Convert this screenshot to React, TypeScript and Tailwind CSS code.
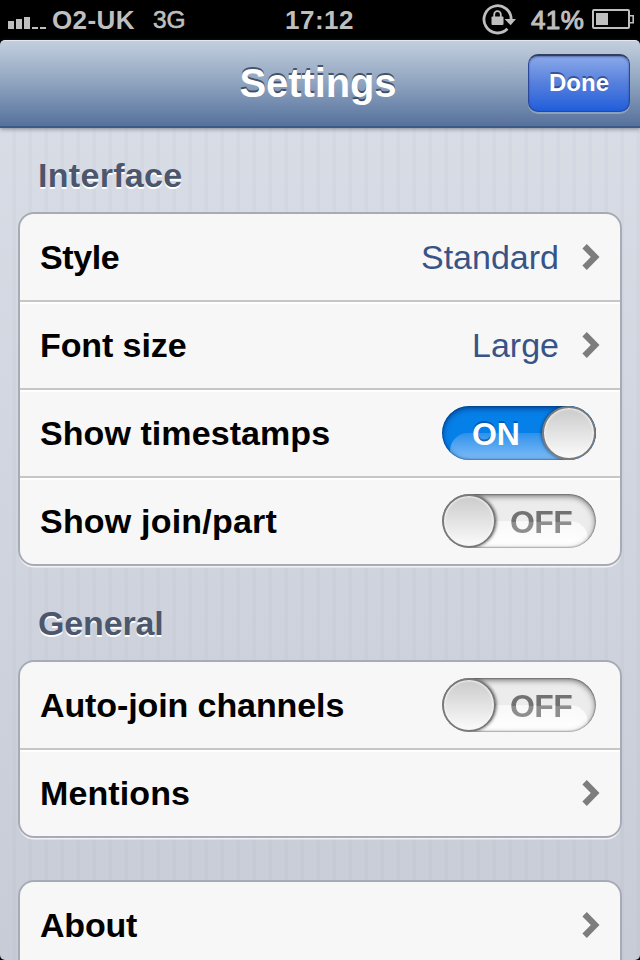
import type { ReactNode } from "react";

function StatusBar() {
  return (
    <div className="flex h-10 w-full items-start bg-black text-[#bfbfbf]">
      <svg className="ml-2 mt-4 h-[13px] w-[38px] shrink-0" viewBox="0 0 38 13" fill="currentColor" shapeRendering="crispEdges">
        <rect x="0" y="5" width="6" height="8" />
        <rect x="8" y="3" width="6" height="10" />
        <rect x="16" y="1" width="6" height="12" />
        <rect x="24" y="11" width="6" height="2" />
        <rect x="32" y="11" width="6" height="2" />
      </svg>
      <div className="ml-1.5 w-[101px] whitespace-nowrap text-[26px] font-bold leading-10 tracking-[0.4px]">O2-UK</div>
      <div className="w-[132px] whitespace-nowrap text-[24.5px] leading-10 tracking-[-0.2px] [-webkit-text-stroke:0.6px_#bfbfbf]">3G</div>
      <div className="w-[197px] whitespace-nowrap text-[26px] font-bold leading-10 tracking-[0.5px]">17:12</div>
      <svg className="mt-0.5 h-[34px] w-[36px] shrink-0" viewBox="0 0 36 34" fill="none">
        <path d="M29.2 17.5A13.6 13.6 0 1 0 25.4 26.8" stroke="currentColor" strokeWidth="2.8" />
        <path d="M22.6 17H34l-5.4 6.3z" fill="currentColor" />
        <rect x="9.5" y="14.5" width="12" height="8.5" rx="1" fill="currentColor" />
        <path d="M12.2 15v-2.5a3.3 3.3 0 0 1 6.6 0V15" stroke="currentColor" strokeWidth="1.8" />
      </svg>
      <div className="ml-[13px] w-[61px] whitespace-nowrap text-[26px] leading-10 tracking-[0.4px] [-webkit-text-stroke:1px_#bfbfbf]">41%</div>
      <svg className="mt-[9px] h-5 w-[42px] shrink-0" viewBox="0 0 42 20" fill="none">
        <rect x="1" y="1" width="36" height="18" rx="1" stroke="currentColor" strokeWidth="2" />
        <rect x="4" y="4" width="12" height="12" fill="currentColor" />
        <path d="M38 6.8h3.2v7H38" stroke="currentColor" strokeWidth="1.6" />
      </svg>
    </div>
  );
}

function NavBar() {
  return (
    <div className="bg-black">
      <header className="relative z-10 grid h-[88px] grid-cols-[1fr_180px_1fr] items-center rounded-t-[5px] border-b-2 border-[#3c5a86] border-t border-t-[#e3e9f1] bg-linear-to-b from-[#c3cfde] via-[#8ea3be] via-50% to-[#56719c] shadow-[0_1px_4px_rgba(50,60,70,0.55)]">
        <span />
        <h1 className="-ml-1 -mt-px whitespace-nowrap text-center text-[40px] font-bold leading-[44px] tracking-[-0.1px] text-white [text-shadow:0_-2px_0_rgba(42,54,72,0.75)]">Settings</h1>
        <button className="-mt-[2px] mr-[10px] h-[58px] w-[102px] justify-self-end rounded-[10px] border border-[#2c479a] border-t-2 border-t-[#343f60] bg-linear-to-b from-[#8ba9ea] via-[#557fdc] to-[#205ddb] text-[24px] font-bold leading-[54px] text-white shadow-[0_2px_0_rgba(255,255,255,0.25),inset_0_1px_2px_rgba(30,50,110,0.5)] [text-shadow:0_-2px_0_rgba(35,58,120,0.7)]">Done</button>
      </header>
    </div>
  );
}

function Chevron() {
  return (
    <svg className="ml-[23px] mr-5 h-[26px] w-[18px] shrink-0" viewBox="0 0 18 26">
      <path d="M4.8 0 17.5 13 4.8 26 .4 21.6 8.8 13 .4 4.4z" fill="#7d7d7d" />
    </svg>
  );
}

function Toggle({ on }: { on?: boolean }) {
  return on ? (
    <div className="relative mr-6 flex h-[54px] w-[154px] items-center overflow-hidden rounded-full bg-[#0680e9]">
      <div className="absolute bottom-0 left-[8px] h-[27px] w-[160px] rounded-tl-[18px] bg-linear-to-b from-[#2b91ea] to-[#7dbdf8]" />
      <div className="absolute inset-0 rounded-full shadow-[inset_0_2px_6px_rgba(0,35,95,0.75),inset_0_0_2px_rgba(0,30,80,0.8)]" />
      <span className="relative ml-[30px] mt-[2px] text-[32px] font-bold tracking-[-0.2px] text-white [text-shadow:0_-2px_0_rgba(0,70,145,0.65)]">ON</span>
      <div className="absolute right-0 top-0 size-[54px] rounded-full border-2 border-[#7a7a7a] bg-linear-to-b from-[#cbcbcb] to-[#fbfbfb] shadow-[-1px_0_3px_rgba(0,20,50,0.5),inset_0_0_2px_1px_#f5f5f5]" />
    </div>
  ) : (
    <div className="relative mr-6 flex h-[54px] w-[154px] items-center overflow-hidden rounded-full bg-[#ececec]">
      <div className="absolute bottom-0 right-[8px] h-[27px] w-[160px] rounded-tr-[18px] bg-linear-to-b from-[#f8f8f8] to-white" />
      <div className="absolute inset-0 rounded-full shadow-[inset_0_2px_6px_rgba(0,0,0,0.55),inset_0_0_2px_rgba(0,0,0,0.75)]" />
      <span className="relative ml-[68px] mt-[2px] bg-linear-to-b from-[#727272] from-50% to-[#8e8e8e] to-50% bg-clip-text text-[32px] font-bold tracking-[-0.6px] text-transparent">OFF</span>
      <div className="absolute left-0 top-0 size-[54px] rounded-full border-2 border-[#7a7a7a] bg-linear-to-b from-[#cbcbcb] to-[#fbfbfb] shadow-[1px_0_3px_rgba(0,0,0,0.45),inset_0_0_2px_1px_#f5f5f5]" />
    </div>
  );
}

function Row({ label, tracking = "", children }: { label: string; tracking?: string; children: ReactNode }) {
  return (
    <div className="flex h-[88px] items-center border-b-2 border-[#c6c6c6] pl-5 shadow-[inset_0_2px_0_#fff] first:shadow-none last:h-[86px] last:border-b-0">
      <span className={"flex-1 whitespace-nowrap text-[34px] font-bold leading-[40px] text-black " + tracking}>{label}</span>
      {children}
    </div>
  );
}

function Value({ children }: { children: ReactNode }) {
  return <span className="whitespace-nowrap text-[34px] leading-[40px] text-[#385487]">{children}</span>;
}

function Card({ children }: { children: ReactNode }) {
  return (
    <div className="mx-[18px] overflow-hidden rounded-[16px] border-2 border-[#a6abb5] bg-[#f7f7f7] shadow-[0_2px_0_-0.5px_rgba(255,255,255,0.75)]">
      {children}
    </div>
  );
}

function Heading({ tracking = "", children }: { tracking?: string; children: ReactNode }) {
  return <h2 className={"ml-[38px] text-[34px] font-bold leading-[40px] text-[#4c566c] [text-shadow:0_2px_0_#fff] " + tracking}>{children}</h2>;
}

export default function App() {
  return (
    <div className="flex h-[960px] w-[640px] flex-col overflow-hidden bg-black font-['Liberation_Sans',Arial,sans-serif]">
      <StatusBar />
      <NavBar />
      <main className="flex-1 overflow-hidden rounded-b-[5px] bg-[repeating-linear-gradient(90deg,transparent_0px,transparent_12px,rgba(130,145,175,0.06)_13px,rgba(130,145,175,0.06)_16px),linear-gradient(180deg,#d8dce5,#c8ccd7)]">
        <div className="mb-[17px] mt-[27px]">
          <Heading tracking="tracking-[0.3px]">Interface</Heading>
        </div>
        <Card>
          <Row label="Style" tracking="tracking-[-0.4px]"><Value>Standard</Value><Chevron /></Row>
          <Row label="Font size" tracking="tracking-[-0.1px]"><Value>Large</Value><Chevron /></Row>
          <Row label="Show timestamps" tracking="tracking-[0.07px]"><Toggle on /></Row>
          <Row label="Show join/part" tracking="tracking-[0.2px]"><Toggle /></Row>
        </Card>
        <div className="mb-[17px] mt-[37px]">
          <Heading tracking="tracking-[-0.15px]">General</Heading>
        </div>
        <Card>
          <Row label="Auto-join channels" tracking="tracking-[-0.1px]"><Toggle /></Row>
          <Row label="Mentions" tracking="tracking-[0.1px]"><Chevron /></Row>
        </Card>
        <div className="mx-[18px] mt-[42px] h-24 rounded-t-[16px] border-2 border-b-0 border-[#a6abb5] bg-[#f7f7f7]">
          <div className="flex h-[86px] items-center pl-5">
            <span className="flex-1 text-[34px] font-bold leading-[40px] tracking-[-0.2px] text-black">About</span>
            <Chevron />
          </div>
        </div>
      </main>
    </div>
  );
}
